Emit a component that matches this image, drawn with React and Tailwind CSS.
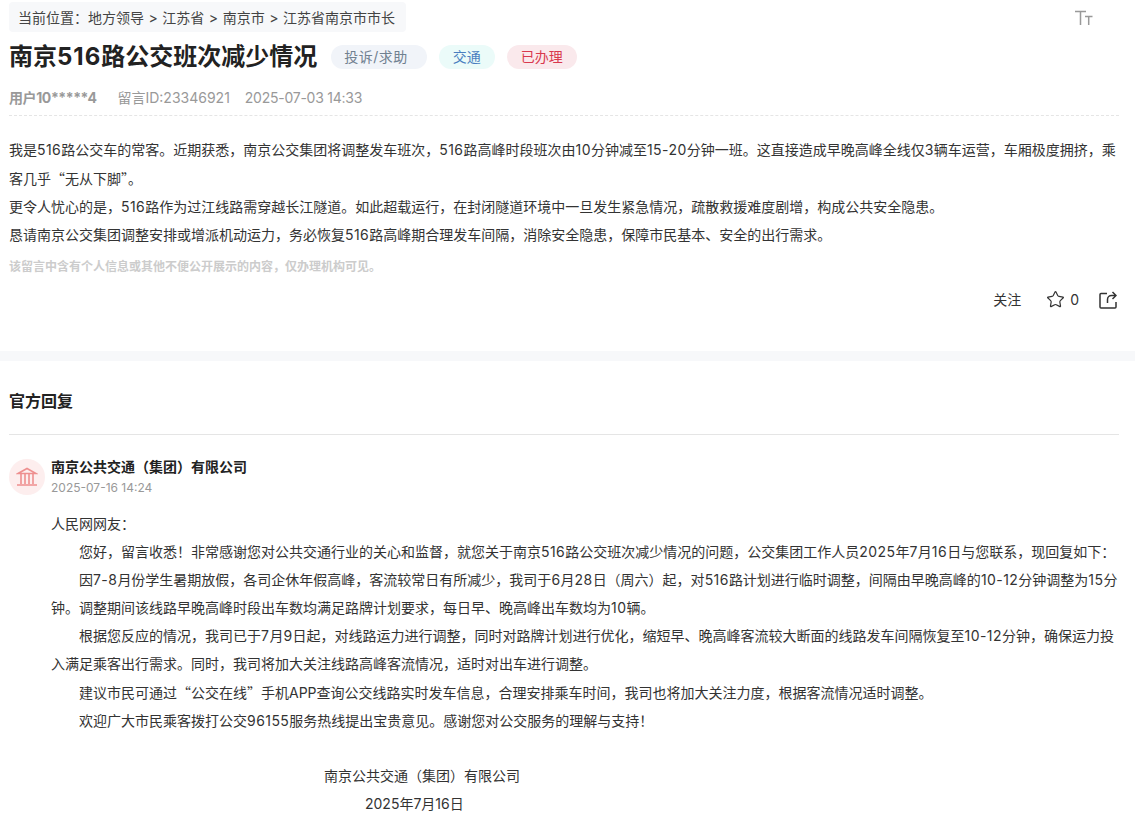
import { Star } from 'lucide-react';

const cjk = "font-['Noto_Sans_CJK_SC',sans-serif]";

// '|' marks where the line wraps, digits get a bit of extra spacing
function Rich({ text }) {
  return text.split('|').map((part, i) => (
    <span key={i}>
      {part.split(/(\d[\d-]*)/).map((s, j) =>
        /^\d/.test(s) ? <span key={j} className="tracking-[0.45px]">{s}</span> : s
      )}
    </span>
  ));
}

const reply = [
  '您好，留言收悉！非常感谢您对公共交通行业的关心和监督，就您关于南京516路公交班次减少情况的问题，公交集团工作人员2025年7月16日与您联系，现回复如下：',
  '因7-8月份学生暑期放假，各司企休年假高峰，客流较常日有所减少，我司于6月28日（周六）起，对516路计划进行临时调整，间隔由早晚高峰的10-12分钟调整为15分|钟。调整期间该线路早晚高峰时段出车数均满足路牌计划要求，每日早、晚高峰出车数均为10辆。',
  '根据您反应的情况，我司已于7月9日起，对线路运力进行调整，同时对路牌计划进行优化，缩短早、晚高峰客流较大断面的线路发车间隔恢复至10-12分钟，确保运力投|入满足乘客出行需求。同时，我司将加大关注线路高峰客流情况，适时对出车进行调整。',
  <>建议市民可通过<span className={cjk}>“公交在线”</span>手机APP查询公交线路实时发车信息，合理安排乘车时间，我司也将加大关注力度，根据客流情况适时调整。</>,
  '欢迎广大市民乘客拨打公交96155服务热线提出宝贵意见。感谢您对公交服务的理解与支持！',
];

function Tag({ className, children }) {
  return <span className={`h-6 rounded-full text-[14px] leading-6 ${className}`}>{children}</span>;
}

function Sep() {
  return <span className="mx-[0.6px]">&gt;</span>;
}

function TextSizeIcon() {
  return (
    <svg width="18" height="16" viewBox="0 0 18 16" fill="none" stroke="#999" strokeWidth="1.5">
      <path d="M0 1.5h11M5.5 1.5V15M10 6.5h7.5M13.7 6.5V15" />
    </svg>
  );
}

function ShareIcon() {
  return (
    <svg width="18" height="18" viewBox="0 0 18 18" fill="none" stroke="#333" strokeWidth="1.5">
      <path d="M8 2.5H2a1 1 0 0 0-1 1V16a1 1 0 0 0 1 1h14a1 1 0 0 0 1-1v-5" />
      <path d="M8.5 12V8.5c0-2.5 2-4 4-4H17M13.5 1 17 4.5 13.5 8" />
    </svg>
  );
}

function BankIcon() {
  return (
    <svg width="22" height="20" viewBox="0 0 22 20" fill="none" stroke="#ee8f8f" strokeWidth="1.6">
      <path d="M2 6.5 11 1.5l9 5zM5 7v10M9 7v10M13 7v10M17 7v10M1 18h20" />
    </svg>
  );
}

export default function App() {
  return (
    <div className="bg-white h-[827px] overflow-hidden text-[14px] text-[#333] font-['Inter','Noto_Sans_CJK_SC',sans-serif]">
      {/* Question */}
      <section className="pl-[9px] pr-[16px] pt-[2px]">
        <div className="flex items-start justify-between">
          <div className="rounded bg-[#f7f8fa] pl-[9px] pr-[11px] h-[30px] leading-[31px] text-[#444]">
            当前位置：地方领导 <Sep /> 江苏省 <Sep /> 南京市 <Sep /> 江苏省南京市市长
          </div>
          <div className="mt-[8px] mr-[26px]">
            <TextSizeIcon />
          </div>
        </div>

        <div className="mt-[7px] flex items-center">
          <h1 className="text-[24px] leading-[36px] font-bold text-[#222]">南京<span className="tracking-[1px]">516</span>路公交班次减少情况</h1>
          <div className="ml-[14px] flex gap-3">
            <Tag className="bg-[#f1f4f9] pl-[13px] pr-[19px] tracking-[0.5px] text-[#708090]">投诉/求助</Tag>
            <Tag className="bg-[#ebfbf9] px-[14px] text-[#4a7fc0]">交通</Tag>
            <Tag className="bg-[#fae9ec] px-[14px] text-[#d9394e]">已办理</Tag>
          </div>
        </div>

        <div className="mt-[10px] flex h-[24px] items-center text-[#999]">
          <span className="font-bold tracking-[-0.4px]">用户10*****4</span>
          <span className="ml-[21px]">留言ID:23346921</span>
          <span className="ml-[15px] tracking-[-0.25px]">2025-07-03 14:33</span>
        </div>

        <div className="mt-[6px] border-t border-dashed border-[#e5e5e5] pt-[20px] leading-[28px]">
          <p><Rich text="我是516路公交车的常客。近期获悉，南京公交集团将调整发车班次，516路高峰时段班次由10分钟减至15-20分钟一班。这直接造成早晚高峰全线仅3辆车运营，车厢极度拥挤，乘" /><span className={cjk}>客几乎“无从下脚”。</span></p>
          <p><Rich text="更令人忧心的是，516路作为过江线路需穿越长江隧道。如此超载运行，在封闭隧道环境中一旦发生紧急情况，疏散救援难度剧增，构成公共安全隐患。" /></p>
          <p><Rich text="恳请南京公交集团调整安排或增派机动运力，务必恢复516路高峰期合理发车间隔，消除安全隐患，保障市民基本、安全的出行需求。" /></p>
        </div>

        <p className="mt-[8px] text-[12px] leading-[20px] font-bold text-[#ccc]">该留言中含有个人信息或其他不便公开展示的内容，仅办理机构可见。</p>

        <div className="mt-[12px] flex items-center justify-end text-[#333]">
          <span>关注</span>
          <Star className="ml-[25px] h-[19px] w-[19px]" strokeWidth={1.5} />
          <span className="ml-[5px]">0</span>
          <span className="ml-[20px] mr-[2px]">
            <ShareIcon />
          </span>
        </div>
      </section>

      <div className="mt-[41px] h-[10px] bg-[#f7f8fa]" />

      {/* Official reply */}
      <section className="pl-[9px] pr-[16px]">
        <h2 className="h-[74px] border-b border-[#e5e5e5] pt-[26px] text-[16px] leading-[28px] font-bold text-[#222]">官方回复</h2>

        <div className="mt-[22px] flex">
          <div className="mt-[2px] flex h-9 w-9 items-center justify-center rounded-full bg-[#fdeeee]">
            <BankIcon />
          </div>
          <div className="ml-[6px] flex-1">
            <div className="text-[14px] leading-[20px] font-bold text-[#222]">南京公共交通（集团）有限公司</div>
            <div className="mt-[1px] text-[12px] leading-[20px] text-[#999]">2025-07-16 14:24</div>
          </div>
        </div>

        <div className="mt-[12px] pl-[42px] leading-[28px]">
          <p>人民网网友：</p>
          {reply.map((p, i) => (
            <p key={i} className="indent-[28px]">
              {typeof p === 'string' ? <Rich text={p} /> : p}
            </p>
          ))}
          <p className="mt-[27px] indent-[273px]">南京公共交通（集团）有限公司</p>
          <p className="indent-[314px]">2025年7月16日</p>
        </div>
      </section>
    </div>
  );
}
